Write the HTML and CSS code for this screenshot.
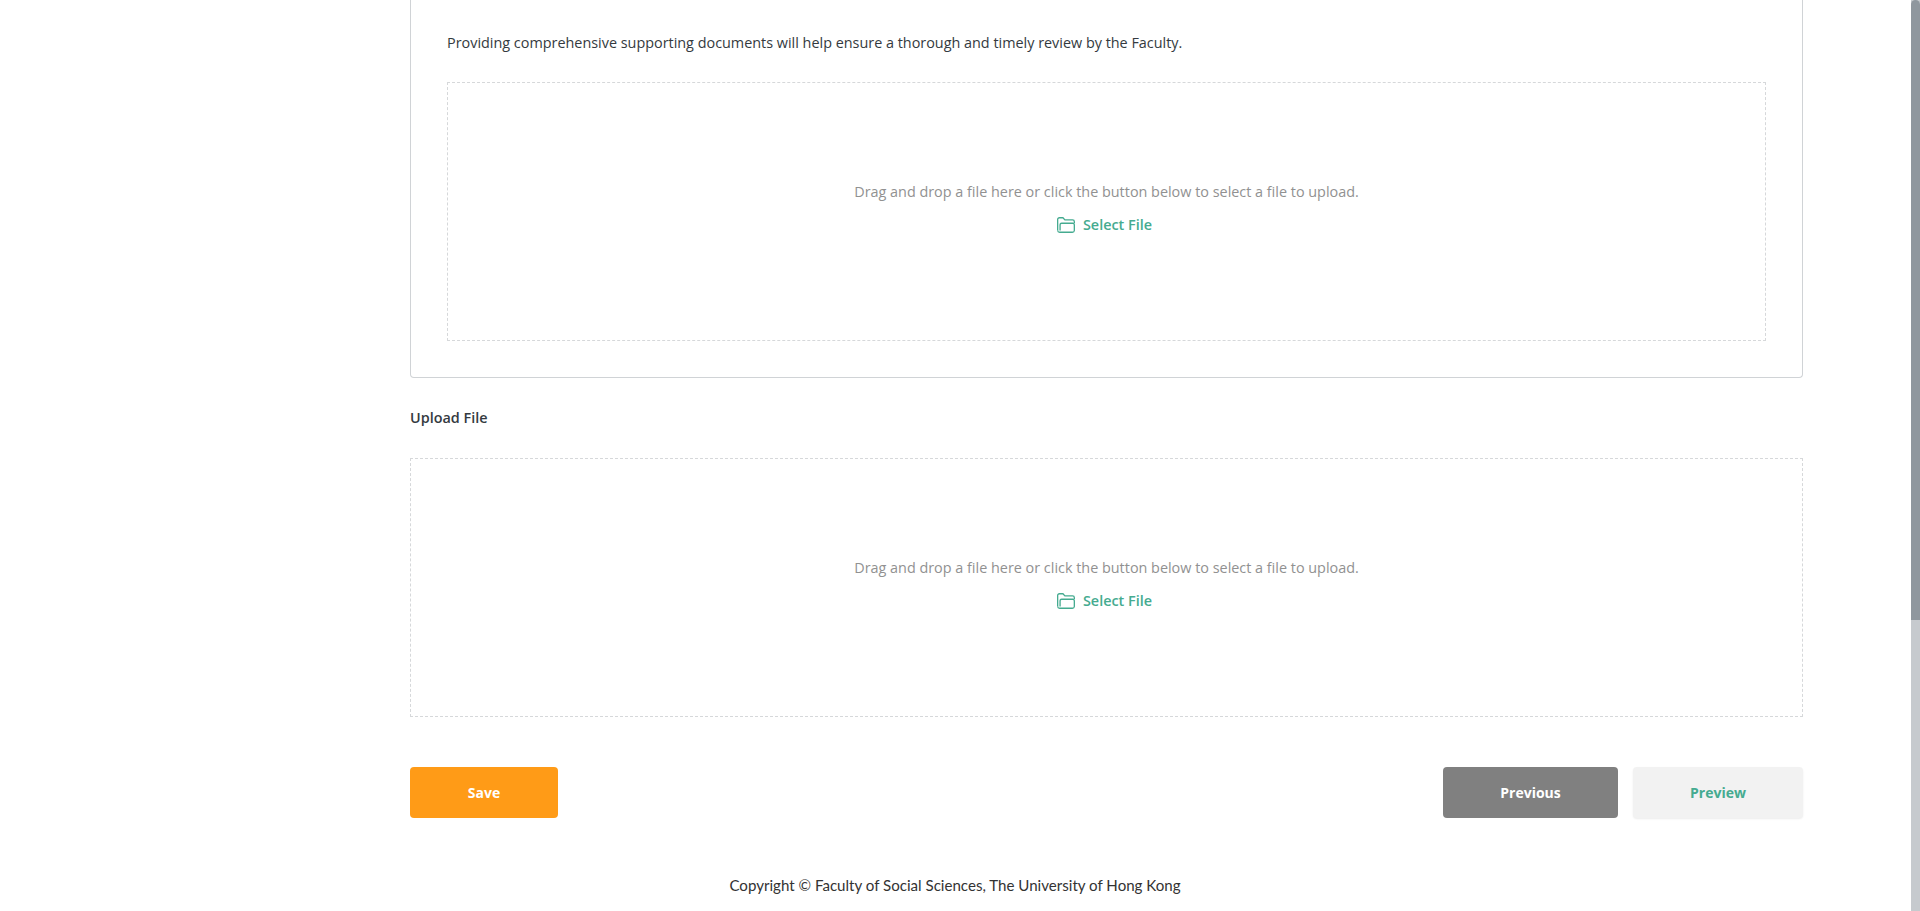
FILE: index.html
```html
<!DOCTYPE html>
<html lang="en">
<head>
<meta charset="utf-8">
<title>Upload</title>
<link rel="stylesheet" href="styles.css">
</head>
<body>
<main class="page">
  <section class="panel">
    <p class="intro">Providing comprehensive supporting documents will help ensure a thorough and timely review by the Faculty.</p>
    <div class="drop">
      <p class="drop-text">Drag and drop a file here or click the button below to select a file to upload.</p>
      <button class="select" type="button">
        <svg class="folder" viewBox="0.4 0.8 16.4 14.4" aria-hidden="true"><path d="M1 13V3a1.6 1.6 0 0 1 1.6-1.6h3.2l1.8 2h7a1.6 1.6 0 0 1 1.6 1.6v1.2"/><path d="M1 13a1.8 1.8 0 0 0 1.8 1.6h11.6a1.8 1.8 0 0 0 1.8-1.6V7.8a1.4 1.4 0 0 0-1.4-1.4H4.6a1.4 1.4 0 0 0-1.4 1.4V13"/></svg>
        <span>Select File</span>
      </button>
    </div>
  </section>
  <h2 class="label">Upload File</h2>
  <div class="drop drop-outer">
    <p class="drop-text">Drag and drop a file here or click the button below to select a file to upload.</p>
    <button class="select" type="button">
      <svg class="folder" viewBox="0.4 0.8 16.4 14.4" aria-hidden="true"><path d="M1 13V3a1.6 1.6 0 0 1 1.6-1.6h3.2l1.8 2h7a1.6 1.6 0 0 1 1.6 1.6v1.2"/><path d="M1 13a1.8 1.8 0 0 0 1.8 1.6h11.6a1.8 1.8 0 0 0 1.8-1.6V7.8a1.4 1.4 0 0 0-1.4-1.4H4.6a1.4 1.4 0 0 0-1.4 1.4V13"/></svg>
      <span>Select File</span>
    </button>
  </div>
  <div class="actions">
    <button class="btn btn-save" type="button">Save</button>
    <div class="actions-right">
      <button class="btn btn-prev" type="button">Previous</button>
      <button class="btn btn-preview" type="button">Preview</button>
    </div>
  </div>
  <footer class="copyright">Copyright © Faculty of Social Sciences, The University of Hong Kong</footer>
</main>
<div class="scrollbar"><div class="scroll-thumb"></div></div>
</body>
</html>
```
FILE: styles.css
```css
* { box-sizing: border-box; }
html, body { margin: 0; height: 911px; overflow: hidden; background: #fff; }
body { font-family: "Open Sans", "Liberation Sans", sans-serif; font-size: 14.4px; color: #343a40; }
.page { width: 1393px; margin-left: 410px; }
.panel {
  border: 1px solid #d0d3d6;
  border-top: none;
  border-radius: 0 0 4px 4px;
  padding: 32px 36px 36px;
  height: 378px;
}
.intro { margin: 0 0 32px; line-height: 20px; height: 18px; color: #343a40; position: relative; top: 1px; }
.drop {
  height: 259px;
  border: 1px dashed #d6d8da;
  display: flex;
  flex-direction: column;
  align-items: center;
  padding-top: 98.5px;
}
.drop-text { margin: 0; line-height: 20px; color: #919191; }
.select {
  display: flex;
  align-items: center;
  gap: 8px;
  margin-top: 13px;
  margin-right: 4px;
  padding: 0;
  background: none;
  border: none;
  font: 600 14.4px "Open Sans", sans-serif;
  color: #45ab90;
  line-height: 20px;
}
.folder { width: 18px; height: 16px; fill: none; stroke: #45ab90; stroke-width: 1.2; }
.label { margin: 30px 0 0; font-size: 14.4px; font-weight: 600; line-height: 20px; height: 50px; color: #343a40; }
.drop-outer { width: 1393px; }
.actions { display: flex; justify-content: space-between; margin-top: 50px; }
.actions-right { display: flex; gap: 15px; }
.btn {
  height: 51px;
  border: none;
  border-radius: 4px;
  font: 700 14px "Open Sans", sans-serif;
  color: #fff;
  padding: 0;
}
.btn-save { width: 148px; background: #ff9b17; }
.btn-prev { width: 175px; background: #808080; }
.btn-preview { width: 170px; background: #f2f2f2; color: #45ab90; box-shadow: 0 1px 2px rgba(0,0,0,.08); }
.copyright {
  margin-top: 57px;
  margin-left: -410px;
  width: 1910px;
  text-align: center;
  font-family: Lato, "Liberation Sans", sans-serif;
  font-size: 15.1px;
  line-height: 20px;
  color: #333;
}
.scrollbar { position: fixed; top: 0; right: 0; width: 9px; height: 911px; background: #c6cace; }
.scroll-thumb { height: 620px; background: #8f979e; border-radius: 5px 5px 0 0; }
```
